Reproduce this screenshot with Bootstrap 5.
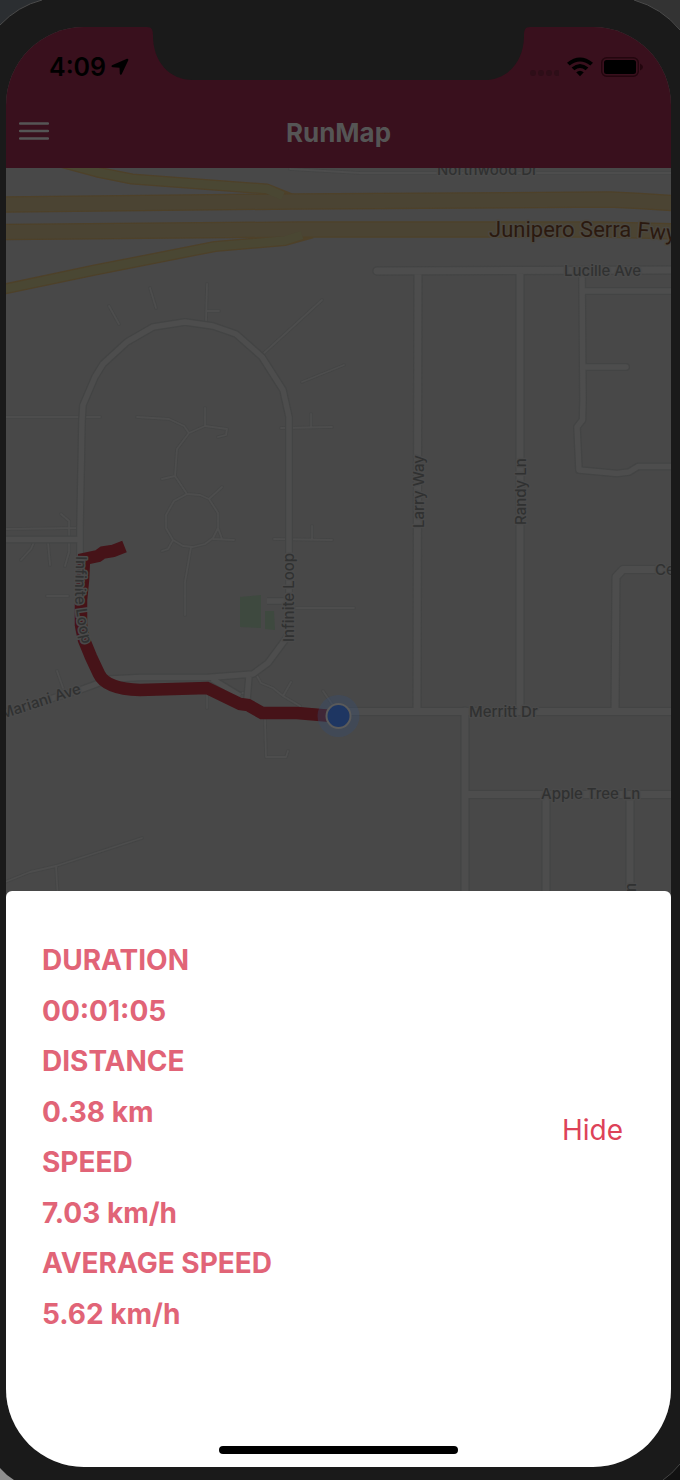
<!DOCTYPE html>
<html lang="en">
<head>
<meta charset="utf-8">
<meta name="viewport" content="width=device-width, initial-scale=1">
<title>RunMap</title>
<link href="https://cdn.jsdelivr.net/npm/bootstrap@5.3.0/dist/css/bootstrap.min.css" rel="stylesheet">
<style>
  body { font-family: Inter, "Liberation Sans", sans-serif; background: #1a1a1a; }
  .device { min-height: 100vh; padding: 27px 9px 13px 6px; background: #1a1a1a; }
  .corner { position: absolute; display: block; }
  .screen { border-radius: 78px; background: #484848; }
  .app-header { background: #39101d; }
  .notch { position: absolute; top: 0; left: 50%; transform: translateX(-50%); }
  .status-bar { height: 80px; padding: 0 28px 0 43px; color: #000; }
  .clock { font-size: 25px; line-height: 32px; font-weight: 600; }
  .title-bar { height: 61px; padding: 0 13px 10px; }
  .app-title { font-size: 26px; line-height: 32px; font-weight: 700; color: #555; }
  .menu-btn { width: 30px; height: 24px; color: #555; }
  .side { flex: 1 1 0; }
  .map-area { min-height: 400px; }
  .map-area > svg { position: absolute; inset: 0; width: 100%; height: 100%; }
  .edge { stroke: #434444; }
  .street { stroke: #4d4d4d; }
  .label-sm { font-size: 15px; font-weight: 500; fill: #303131; stroke: #4a4a4a; stroke-width: 3px; paint-order: stroke; }
  .label-lg { font-family: Roboto, sans-serif; font-size: 22px; font-weight: 400; fill: #2b190f; stroke: #4a4740; stroke-width: 3px; paint-order: stroke; }
  .sheet { margin-top: -6px; border-radius: 6px 6px 0 0; }
  .sheet-body { padding: 44px 36px 107px; }
  .stats { font-size: 28px; font-weight: 700; color: #e16477; }
  .stats dt { font-weight: 700; line-height: 51px; }
  .stats dd { line-height: 50px; }
  .hide-btn { font-size: 28px; line-height: 34px; color: #dd4258; padding: 0 12px; margin-bottom: 14px; }
  .home-bar { width: 36%; height: 8px; border-radius: 4px; background: #000; margin-bottom: 13px; }
</style>
</head>
<body>
<div class="device d-flex flex-column position-relative overflow-hidden">
  <svg class="corner top-0 start-0" width="46" height="28" aria-hidden="true"><path d="M0 0H42Q18 6 0 25Z" fill="#2b2e31"/><path d="M42 0Q18 6 0 25" fill="none" stroke="#4b4b4b"/></svg>
  <svg class="corner top-0 end-0" width="48" height="32" aria-hidden="true"><path d="M2 0H48V30Q30 8 2 0Z" fill="#333"/><path d="M2 0Q30 8 48 30" fill="none" stroke="#4b4b4b"/></svg>
  <svg class="corner bottom-0 start-0" width="16" height="14" aria-hidden="true"><path d="M0 2Q6 9 14 14H0Z" fill="#8f8f8f"/></svg>
  <svg class="corner bottom-0 end-0" width="18" height="16" aria-hidden="true"><path d="M1 16Q10 10 18 0V16Z" fill="#111"/><path d="M1 16Q10 10 18 0" fill="none" stroke="#444"/></svg>

  <main class="screen flex-grow-1 d-flex flex-column overflow-hidden position-relative">
    <header class="app-header position-relative">
      <svg class="notch" width="384" height="53" viewBox="0 0 384 53" aria-hidden="true"><path d="M0 0C5 0 6 3 6 9C6 34 22 53 46 53H337C361 53 377 34 377 9C377 3 378 0 383 0Z" fill="#1a1a1a"/></svg>
      <div class="status-bar d-flex justify-content-between align-items-center">
        <div class="d-flex align-items-center gap-1">
          <span class="clock">4:09</span>
          <svg width="20" height="20" viewBox="0 0 20 20" role="img" aria-label="Location in use"><path d="M2 8.300L17 1.800Q18.800 1.500 18.300 3.300L11.800 17Q10.400 18.800 9.800 16.800L9.500 10.800L3 10.300Q.500 9.800 2 8.300Z"/></svg>
        </div>
        <div class="d-flex align-items-center gap-2">
          <svg width="31" height="20" viewBox="0 0 31 20" fill="#2e0e18" role="img" aria-label="No signal"><circle cx="5" cy="16" r="3"/><circle cx="13" cy="16" r="3"/><circle cx="21" cy="16" r="3"/><circle cx="29" cy="16" r="3"/></svg>
          <svg width="26" height="20" viewBox="0 0 26 20" role="img" aria-label="Wi-Fi"><path d="M0 5.800Q13-5 26 5.800L23.300 8.600Q13 .300 2.700 8.600Z"/><path d="M4.600 10.500Q13 3.500 21.400 10.500L18.600 13.300Q13 8.800 7.400 13.300Z"/><path d="M9.200 15.200Q13 12.200 16.800 15.200L13 19.200Z"/></svg>
          <svg width="42" height="20" viewBox="0 0 42 20" role="img" aria-label="Battery full"><rect x=".7" y=".7" width="36.600" height="18.600" rx="5" fill="none" stroke="#23060e" stroke-width="1.400"/><rect x="3" y="3" width="32" height="14" rx="2.500"/><path d="M39 6.500Q42 8 42 10T39 13.500Z" fill="#23060e"/></svg>
        </div>
      </div>
      <nav class="title-bar d-flex align-items-center" aria-label="Main">
        <div class="side d-flex">
          <button type="button" class="menu-btn btn p-0 border-0 d-flex align-items-start" aria-label="Menu">
            <svg width="30" height="20" viewBox="0 0 30 20" stroke="currentColor" stroke-width="2.400" stroke-linecap="round"><path d="M1 2.500H29M1 10H29M1 17.500H29"/></svg>
          </button>
        </div>
        <h1 class="app-title m-0">RunMap</h1>
        <div class="side"></div>
      </nav>
    </header>

    <section class="map-area flex-grow-1 position-relative" aria-label="Map of the run">
      <svg viewBox="6 168 665 729" preserveAspectRatio="xMidYMin slice" fill="none" stroke-linejoin="round">
        <defs>
          <g id="streets" stroke-linecap="round">
            <path d="M377 271L700 270M418 271L417 711M520 271V711M340 711.500H700M465 711V910M465 794.500H700M546 795V910M630 795V910M615 711L616 577L623 569.500H700"/>
          </g>
          <g id="lanes">
            <path d="M582 274L583 400L582.500 420L577 427L579 470L617 473.500L629 472L638 466.500H700M583 291H700M583 367H626" stroke-linecap="round"/>
            <path d="M80 553L80 527L82 420L83 405L86 398L95 377L103 364L127 342L153 327L185 322L213 326L236 334L262 357L283 390L289 417V632L285 640L268 663L253 674L207 677.500H140L110 679L80 690L0 714M80 540V590L79 630L100 678M249 676L247 700M212 679L240 696M0 539.500H80M267 601H286"/>
          </g>
          <g id="paths" stroke-linecap="round">
            <path d="M109 306L119 324M150 288L156 308M207 284L206 322M207 311H219M263 354L322 300M302 382L344 365M6 417H100M137 417L169 419L184 426L189 433L177 449L175 476L187 494M189 433L205 426L227 429L226 435L218 437M205 426V408M162 479L175 476M187 494L174 501L166 515V528L173 540L183 546L193 547L205 544L213 538L218 528V513L209 499L200 495L187 494M209 499L222 487M218 528L222 539M213 539L234 540M173 540L168 549L162 551M191 547L185 582V615M281 428L332 427M311 426V414M274 539L332 540M312 539V526M296 608H354M6 529L80 528M61 514L69 521V552L65 566M34 542L31 549L21 560M48 542L50 565M47 596H68M57 671L63 688M207 695V708M217 679L233 693H247M257 676L261 683L273 688L283 696L300 706M283 696L291 682M323 691L332 704M265 720L266 757H286L288 751M0 884L30 872L56 866L142 838M56 866L58 900M290 169L360 173H700"/>
          </g>
        </defs>
        <use href="#paths" stroke="#444545" stroke-width="3.500"/>
        <use href="#paths" class="street" stroke-width="1.800"/>
        <use href="#streets" class="edge" stroke-width="9.500"/>
        <use href="#lanes" class="edge" stroke-width="8"/>
        <use href="#streets" class="street" stroke-width="7"/>
        <use href="#lanes" class="street" stroke-width="5.500"/>

        <g stroke="#4e4129">
          <path d="M60 162L97 172L132 179L267 189L292 199M0 290L95 270L215 246.500L285 240.500L312 233" stroke-width="11"/>
          <path d="M0 204.500L292 201.500L610 199.500L640 201L700 205M0 232L300 229.500H600L700 232" stroke-width="16.500"/>
        </g>
        <path d="M0 204.500L292 201.500L610 199.500L640 201L700 205M0 232L300 229.500H600L700 232" stroke="#4b4433" stroke-width="14"/>
        <path d="M60 162L97 172L132 179L267 189L283 196M0 290L95 270L215 246.500L285 240.500L302 235" stroke="#4a4733" stroke-width="8.500"/>

        <path d="M240 597L261 595V628L240 627ZM265 611H274L275 630L265 629Z" fill="#3e493f"/>

        <path d="M124.500 546.500L113 551L103 552.500L98 556L84 559L83 580L81 600V625L84 640L91 657L99 674Q106 689 140 690L207 688L240 704L248 705L262 713H297L332 716" stroke="#461318" stroke-width="12.500" stroke-linejoin="miter"/>
        <circle cx="338.500" cy="716" r="21" fill="#364c72" fill-opacity=".35"/>
        <circle cx="338.500" cy="716" r="12" fill="#1e3662" stroke="#5a5a5a" stroke-width="2"/>

        <path id="fwy-line" d="M489 236.500H628L700 243"/>
        <path id="loop-line" d="M76 556L75 590Q75 622 88 665"/>
        <g class="label-sm">
          <text x="437" y="175">Northwood Dr</text>
          <text x="564" y="276">Lucille Ave</text>
          <text x="469" y="717">Merritt Dr</text>
          <text x="541" y="799">Apple Tree Ln</text>
          <text x="655" y="575">Ce</text>
          <text transform="translate(424 528) rotate(-90)">Larry Way</text>
          <text transform="translate(526 525) rotate(-90)">Randy Ln</text>
          <text transform="translate(294 642) rotate(-90)">Infinite Loop</text>
          <text transform="translate(636 892) rotate(-90)">n</text>
          <text transform="translate(2 719) rotate(-18)">Mariani Ave</text>
          <text><textPath href="#loop-line">Infinite Loop</textPath></text>
        </g>
        <text class="label-lg"><textPath href="#fwy-line">Junipero Serra Fwy</textPath></text>
      </svg>
    </section>

    <section class="sheet bg-white position-relative d-flex flex-column align-items-center" aria-label="Run statistics">
      <div class="sheet-body w-100 d-flex justify-content-between align-items-center">
        <dl class="stats m-0">
          <dt>DURATION</dt><dd class="m-0">00:01:05</dd>
          <dt>DISTANCE</dt><dd class="m-0">0.38 km</dd>
          <dt>SPEED</dt><dd class="m-0">7.03 km/h</dd>
          <dt>AVERAGE SPEED</dt><dd class="m-0">5.62 km/h</dd>
        </dl>
        <button type="button" class="hide-btn btn border-0">Hide</button>
      </div>
      <div class="home-bar"></div>
    </section>
  </main>
</div>
<script src="https://cdn.jsdelivr.net/npm/bootstrap@5.3.0/dist/js/bootstrap.bundle.min.js"></script>
</body>
</html>
